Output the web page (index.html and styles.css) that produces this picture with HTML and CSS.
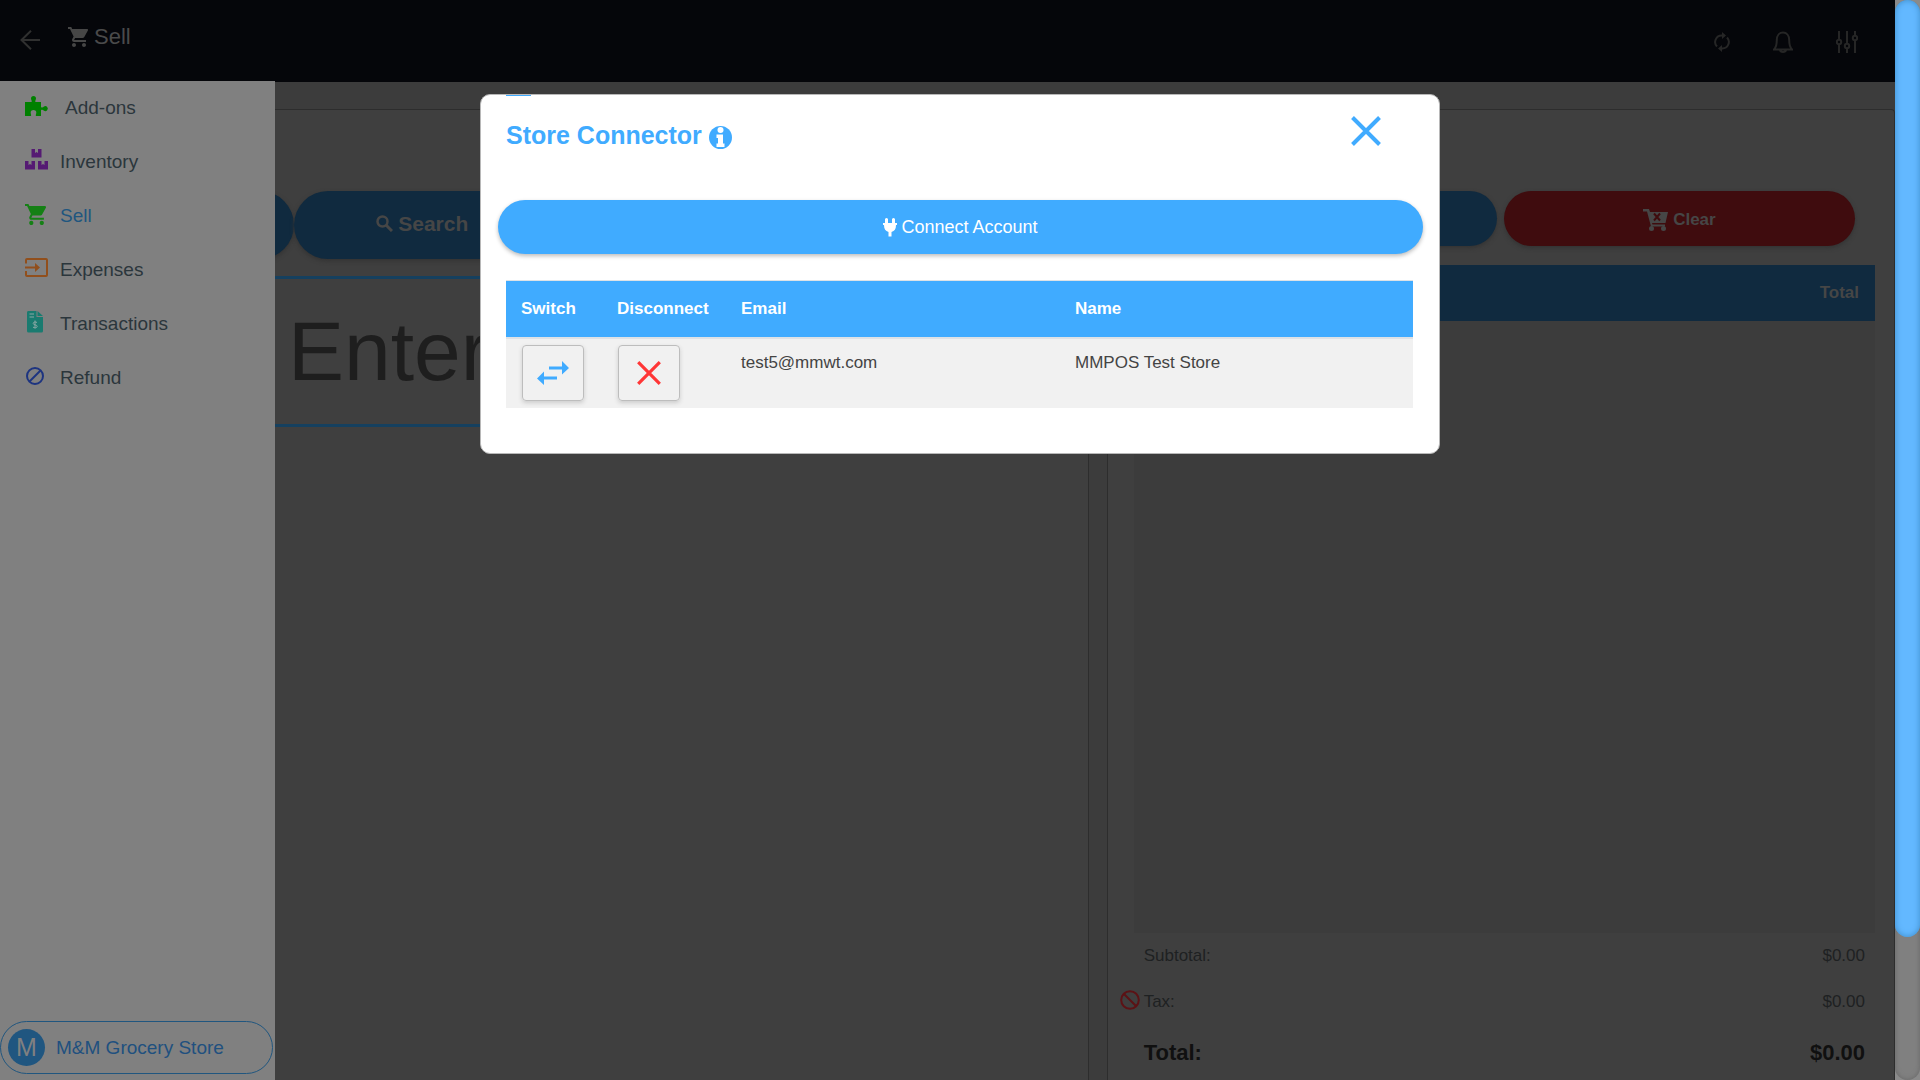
FILE: index.html
```html
<!DOCTYPE html>
<html lang="en">
  <head>
    <meta charset="UTF-8" />
    <meta name="viewport" content="width=device-width, initial-scale=1.0" />
    <title>Sell</title>
    <link rel="stylesheet" href="styles.css">
  </head>
  <body>
    <svg class="defs" aria-hidden="true">
      <symbol id="cart" viewBox="1 2 20 20">
        <path d="M7 18c-1.100 0-1.990.900-1.990 2S5.900 22 7 22s2-.900 2-2-.900-2-2-2zM1 2v2h2l3.600 7.590-1.350 2.450c-.160.280-.250.610-.250.960 0 1.100.900 2 2 2h12v-2H7.420c-.140 0-.250-.110-.250-.250l.030-.120.900-1.630h7.450c.750 0 1.410-.410 1.750-1.030l3.580-6.490A1 1 0 0 0 20 4H5.210l-.940-2H1zm16 16c-1.100 0-1.990.900-1.990 2s.890 2 1.990 2 2-.900 2-2-.900-2-2-2z"/>
      </symbol>
      <symbol id="cross" viewBox="0 0 30 30">
        <path d="M1.500 1.500l27 27M28.500 1.500l-27 27"/>
      </symbol>
    </svg>

    <div class="app">
      <header class="topbar">
        <button class="icon-btn back" aria-label="Back">
          <svg width="20" height="20" viewBox="0 0 20 20"><path d="M11 .8L1.500 10l9.500 9.200M1.500 10H20"/></svg>
        </button>
        <h1><svg width="20" height="20"><use href="#cart"/></svg>Sell</h1>
        <div class="tools">
          <button class="icon-btn" aria-label="Sync">
            <svg width="16" height="20" viewBox="0 0 16 20"><path d="M3 14.500A6.500 6.500 0 0 1 8 3.500h1M13 5.500A6.500 6.500 0 0 1 8 16.500H7"/><path class="tip" d="M8 0l4 3.500L8 7zM8 13l-4 3.500L8 20z"/></svg>
          </button>
          <button class="icon-btn" aria-label="Notifications">
            <svg width="20" height="22" viewBox="0 0 20 22"><path d="M1 18.500c2.500-2.500 2.800-4.500 2.800-9.500 0-4.500 2.600-7.500 6.200-7.500s6.200 3 6.200 7.500c0 5 .3 7 2.800 9.500zM7 19c.5 2.500 5.500 2.500 6 0"/></svg>
          </button>
          <button class="icon-btn" aria-label="Settings">
            <svg width="22" height="22" viewBox="0 0 22 22"><path d="M3 0v9M3 13v9M11 0v13M11 17v5M19 0v5M19 9v13"/><circle cx="3" cy="11" r="2.200"/><circle cx="11" cy="15" r="2.200"/><circle cx="19" cy="7" r="2.200"/></svg>
          </button>
        </div>
      </header>

      <main>
        <section class="panel products">
          <div class="actions">
            <button class="pill" aria-label="Scan"></button>
            <button class="pill">
              <svg width="17" height="17" viewBox="0 0 17 17"><circle cx="6.500" cy="6.500" r="5" fill="none" stroke="currentColor" stroke-width="2.500"/><path d="M10 10l6 6" stroke="currentColor" stroke-width="3"/></svg>
              Search
            </button>
          </div>
          <input class="entry" type="text" placeholder="Enter" aria-label="Enter item" />
        </section>

        <section class="panel receipt">
          <div class="actions">
            <button class="pill" aria-label="Hold"></button>
            <button class="pill danger">
              <svg width="25" height="22" viewBox="0 0 25 22"><path d="M0 0h6l1 3h18l-2.500 11H9l.5 1.500H22v2H8L4 2.500H0z"/><circle cx="8.500" cy="19.500" r="2.500"/><circle cx="20.500" cy="19.500" r="2.500"/><path class="mark" d="M11 4.500l6 7M17 4.500l-6 7"/></svg>
              Clear
            </button>
          </div>
          <div class="lines">
            <table>
              <thead><tr><th>Total</th></tr></thead>
            </table>
          </div>
          <dl class="totals">
            <div><dt>Subtotal:</dt><dd>$0.00</dd></div>
            <div><dt><svg class="no-tax" width="20" height="20" viewBox="0 0 20 20"><circle cx="10" cy="10" r="8.800"/><path d="M4 4l12 12"/></svg>Tax:</dt><dd>$0.00</dd></div>
            <div class="grand"><dt>Total:</dt><dd>$0.00</dd></div>
          </dl>
        </section>
      </main>
    </div>

    <nav class="sidebar">
      <ul>
        <li><a href="#" class="addons">
          <svg width="24" height="24" viewBox="0 0 24 24"><path fill="#008000" d="M0 8h6.500c.8-1-.5-2-.5-3.500a2.500 2.500 0 0 1 5 0c0 1.500-1.300 2.500-.5 3.500H16v5c1 1 2 .3 3-.5a2.500 2.500 0 1 1 0 4.300c-1-.8-2-1.500-3-.5V22h-5c-.8-1 .5-2 .3-4-.3-2.800-5.300-2.800-5.600 0-.2 2 1 3 .3 4H0z"/></svg>
          Add-ons</a></li>
        <li><a href="#">
          <svg width="24" height="24" viewBox="0 0 24 24"><path fill="#551a73" d="M6.500 1H10v4l1.500-1L13 5V1h3.500v8.500h-10zM0 13h3.500v4L5 16l1.500 1v-4H10v8.500H0zM13 13h3.500v4l1.500-1 1.500 1v-4H23v8.500H13z"/></svg>
          Inventory</a></li>
        <li><a href="#" class="active">
          <svg width="21" height="21"><use href="#cart"/></svg>
          Sell</a></li>
        <li><a href="#">
          <svg width="24" height="24" viewBox="0 0 24 24"><path fill="none" stroke="#914f1c" stroke-width="2" d="M1 7.500V4q0-1 1-1h19q1 0 1 1v15q0 1-1 1H2q-1 0-1-1v-4M0 11.500h11"/><path fill="#914f1c" d="M10 7l5 4.500-5 4.500z"/></svg>
          Expenses</a></li>
        <li><a href="#">
          <svg width="24" height="24" viewBox="0 0 24 24"><path fill="#1a7b70" d="M3 1h8.500v6H18v14q0 1.500-1.500 1.500h-13Q2 22.500 2 21V2.500Q2 1 3 1zM12.500 1L18 6h-5.500z"/><path fill="none" stroke="#8aa8a5" d="M4.500 4H9M4.500 7H9M12 12.500c-1-.8-3.800-.8-3.800 1s4 1 4 2.800-3 1.800-4.200.8M10 10.500v8"/></svg>
          Transactions</a></li>
        <li><a href="#">
          <svg class="refund" width="20" height="18" viewBox="0 0 20 18"><circle cx="10" cy="9" r="8"/><path d="M4.500 14.500l11-11"/></svg>
          Refund</a></li>
      </ul>
      <button class="store"><span class="avatar">M</span>M&amp;M Grocery Store</button>
    </nav>

    <div class="modal" role="dialog" aria-labelledby="modal-title">
      <div class="modal-header">
        <h2 id="modal-title">Store Connector
          <svg width="23" height="23" viewBox="0 0 23 23"><circle cx="11.500" cy="11.500" r="11.500" fill="#40abff"/><circle cx="11.500" cy="4" r="3" fill="#fff"/><path fill="#fff" d="M7.500 8.500h6.500v9h1.500V21h-8v-3.500H9V12H7.500z"/></svg>
        </h2>
        <button class="close" aria-label="Close"><svg width="30" height="30"><use href="#cross"/></svg></button>
      </div>
      <button class="connect">
        <svg width="14" height="19" viewBox="0 0 14 19"><path d="M2 1q1.500-2 3 0v4h4V1q1.500-2 3 0v4h2v2h-1c0 4-1.500 6-4.500 7v4.500h-3V14C2.500 13 1 11 1 7H0V5h2z"/></svg>
        Connect Account
      </button>
      <table class="accounts">
        <thead>
          <tr><th class="col-switch">Switch</th><th class="col-disconnect">Disconnect</th><th class="col-email">Email</th><th>Name</th></tr>
        </thead>
        <tbody>
          <tr>
            <td class="control"><button aria-label="Switch"><svg width="32" height="24" viewBox="0 0 32 24" fill="#40abff"><path d="M12 5.500h13V0l7 7-7 6.500v-5H12zM20 15.500H7V10.500L0 17.500 7 24v-5.500h13z"/></svg></button></td>
            <td class="control"><button class="remove" aria-label="Disconnect"><svg width="24" height="24"><use href="#cross"/></svg></button></td>
            <td>test5@mmwt.com</td>
            <td>MMPOS Test Store</td>
          </tr>
        </tbody>
      </table>
    </div>

    <div class="scrollbar" aria-hidden="true"><div class="thumb"></div></div>
  </body>
</html>
```
FILE: styles.css
```css
* {
  box-sizing: border-box;
}
body {
  margin: 0;
  height: 100vh;
  overflow: hidden;
  background-color: #3c3c3c;
  color: #1e2122;
  font-family: "Liberation Sans", Arial, sans-serif;
  font-size: 17px;
}
button {
  font-family: inherit;
  border: none;
  background: none;
  padding: 0;
}
.defs {
  position: absolute;
  width: 0;
  height: 0;
}

.app {
  height: 100vh;
  margin-right: 25px;
  display: flex;
  flex-direction: column;
}

/* top bar */
.topbar {
  height: 82px;
  flex-shrink: 0;
  display: flex;
  align-items: center;
  padding: 0 37px 2px 20px;
  background-color: #05060a;
}
.topbar h1 {
  display: flex;
  align-items: center;
  gap: 6px;
  margin: 0 0 6px 28px;
  font-size: 22px;
  font-weight: normal;
  color: #4a4a4a;
}
.topbar h1 svg {
  fill: #464646;
}
.icon-btn svg {
  display: block;
  fill: none;
  stroke: #262626;
  stroke-width: 2;
}
.icon-btn .tip {
  fill: #262626;
  stroke: none;
}
.back svg {
  stroke: #303030;
}
.tools {
  display: flex;
  align-items: center;
  gap: 43px;
  margin: 4px 0 0 auto;
}

main {
  flex: 1;
  min-height: 0;
  display: grid;
  grid-template-columns: 58fr 42fr;
  gap: 18px;
  padding-top: 27px;
}
.panel {
  border: 1px solid #2d2d2d;
  border-bottom: none;
  border-radius: 4px 4px 0 0;
  background-color: #3f3f3f;
  padding-top: 81px;
}
.products {
  padding-left: 37px;
  padding-right: 25px;
}
.products .actions {
  display: grid;
  grid-template-columns: repeat(4, 1fr);
}
.pill {
  height: 55px;
  display: flex;
  align-items: center;
  justify-content: center;
  gap: 5px;
  border-radius: 34px;
  background-color: #102a3f;
  color: #464646;
  font-size: 17px;
  font-weight: bold;
  box-shadow: 0 2px 4px #333;
}
.products .pill {
  height: 68px;
  padding-bottom: 3px;
  font-size: 21px;
}
.pill svg {
  fill: currentColor;
}
.pill .mark {
  stroke: #3f0c0e;
  stroke-width: 2;
}
.danger {
  padding-top: 3px;
  background-color: #3f0c0e;
}
.entry {
  display: block;
  width: 100%;
  height: 151px;
  margin-top: 17px;
  padding: 0 0 0 250px;
  border: solid #15405f;
  border-width: 3px 0;
  border-radius: 0;
  background: none;
  font-family: inherit;
  font-size: 84px;
}
.entry::placeholder {
  color: #1e1e1e;
}

.receipt {
  min-height: 0;
  display: flex;
  flex-direction: column;
}
.receipt .actions {
  display: grid;
  grid-template-columns: 1fr 1fr;
  gap: 7px;
  padding: 0 39px 0 38px;
}
.lines {
  flex: 1;
  margin: 19px 19px 0 26px;
  background-color: #3c3c3c;
}
.lines table {
  width: 100%;
  border-collapse: collapse;
}
.lines th {
  height: 56px;
  padding: 0 16px;
  background-color: #102a3f;
  color: #464646;
  text-align: right;
}
.totals {
  margin: 0;
  padding: 0 29px 0 36px;
}
.totals div {
  display: flex;
  align-items: center;
  justify-content: space-between;
  height: 46px;
}
.totals dt {
  position: relative;
}
.totals dd {
  margin: 0;
}
.no-tax {
  position: absolute;
  left: -24px;
  top: -2px;
  fill: none;
  stroke: #5c1215;
  stroke-width: 2;
}
.totals .grand {
  height: 55px;
  color: #101010;
  font-size: 22px;
  font-weight: bold;
}

/* side menu */
.sidebar {
  position: fixed;
  top: 81px;
  bottom: 0;
  left: 0;
  width: 275px;
  display: flex;
  flex-direction: column;
  justify-content: space-between;
  padding-bottom: 6px;
  background-color: #808080;
}
.sidebar ul {
  list-style: none;
  margin: 0;
  padding: 0;
}
.sidebar a {
  display: grid;
  grid-template-columns: 24px 1fr;
  align-items: center;
  column-gap: 11px;
  height: 54px;
  padding-left: 25px;
  font-size: 19px;
  color: #2b363c;
  text-decoration: none;
}
.sidebar a svg {
  margin-bottom: 4px;
}
.sidebar .addons {
  column-gap: 16px;
}
.sidebar .active {
  color: #20567f;
}
.active svg {
  fill: #158015;
}
.refund {
  fill: none;
  stroke: #1d3480;
  stroke-width: 2;
}
.store {
  display: flex;
  align-items: center;
  gap: 11px;
  width: 273px;
  height: 53px;
  padding-left: 7px;
  border: 1px solid #20567f;
  border-radius: 27px;
  color: #20507f;
  font-size: 19px;
}
.avatar {
  width: 37px;
  height: 37px;
  border-radius: 50%;
  background-color: #205680;
  color: #808080;
  font-size: 25px;
  line-height: 37px;
}

/* store connector */
.modal {
  position: fixed;
  top: 94px;
  left: 25%;
  width: 50%;
  padding: 0 26px 45px 25px;
  border: 1px solid #b8b8b8;
  border-radius: 10px;
  background-color: #fff;
}
.modal::before {
  content: "";
  position: absolute;
  top: 0;
  left: 25px;
  width: 25px;
  height: 1px;
  background-color: #40abff;
}
.modal-header {
  display: flex;
  justify-content: space-between;
  height: 105px;
  padding: 21px 32px 0 0;
}
.modal h2 {
  display: flex;
  align-items: center;
  gap: 7px;
  height: 38px;
  margin: 0;
  color: #40abff;
  font-size: 25px;
}
.modal h2 svg {
  margin-top: 4px;
}
.close {
  height: 30px;
  stroke: #40abff;
  stroke-width: 4;
}
.connect {
  display: flex;
  align-items: center;
  justify-content: center;
  gap: 4px;
  width: calc(100% + 18px);
  height: 54px;
  margin: 0 -10px 26px -8px;
  border-radius: 27px;
  background-color: #40abff;
  color: #fff;
  font-size: 18px;
  box-shadow: 0 2px 4px #bbb;
}
.connect svg {
  fill: #fff;
}
.accounts {
  width: 100%;
  table-layout: fixed;
  border-collapse: separate;
  border-spacing: 0;
  color: #444;
}
.accounts th {
  height: 59px;
  padding: 0 15px;
  border-top: 1px solid #dee2e6;
  border-bottom: 2px solid #dee2e6;
  background-color: #40abff;
  color: #fff;
  text-align: left;
}
.accounts td {
  height: 69px;
  padding: 14px 15px 0;
  background-color: #f1f1f1;
  vertical-align: top;
}
.accounts .control {
  padding: 6px 16px;
}
.accounts td button {
  display: flex;
  align-items: center;
  justify-content: center;
  width: 62px;
  height: 56px;
  border: 1px solid #bdbdbd;
  border-radius: 4px;
  box-shadow: 0 2px 4px #ccc;
}
.remove {
  stroke: #ff3636;
  stroke-width: 4;
}
.col-switch {
  width: 96px;
}
.col-disconnect {
  width: 124px;
}
.col-email {
  width: 334px;
}

/* page scrollbar */
.scrollbar {
  position: fixed;
  top: 0;
  right: 0;
  bottom: 0;
  width: 25px;
  border-radius: 13px;
  background-color: #808080;
  box-shadow: inset 0 0 5px #666, 0 0 0 13px #8a8a8a;
  clip-path: inset(0);
}
.thumb {
  height: 937px;
  border-radius: 13px;
  background-color: #63b8ff;
  box-shadow: inset 0 0 6px #3d8cc9;
}
```
